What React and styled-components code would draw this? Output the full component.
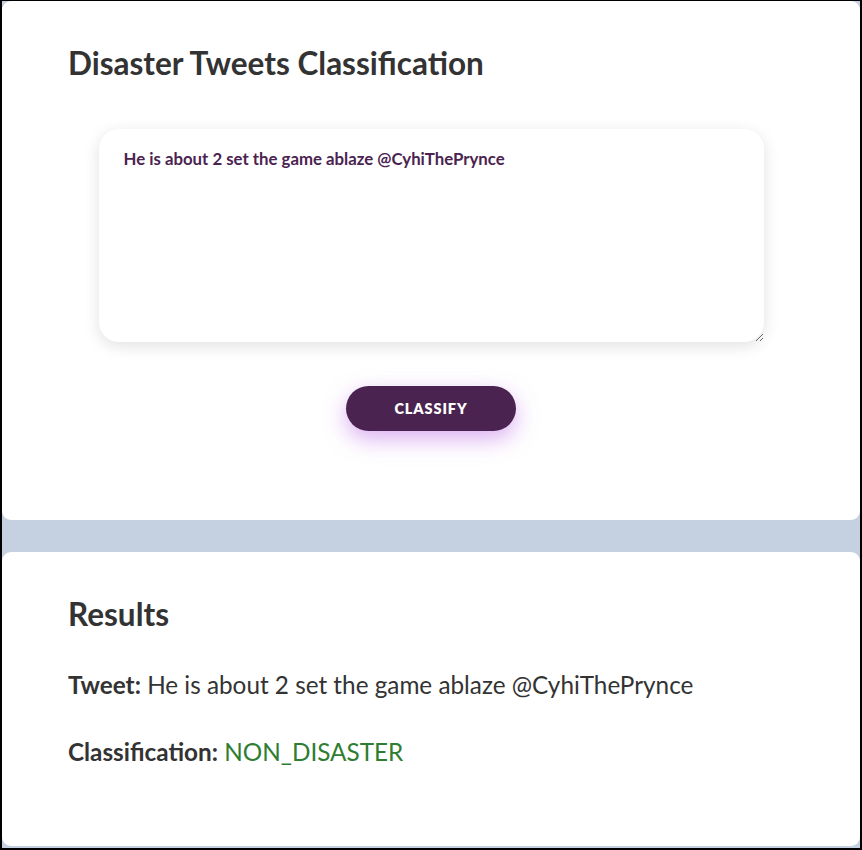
import React, { useState } from "react";
import styled, { createGlobalStyle } from "styled-components";

const Global = createGlobalStyle`
  html, body { margin: 0; padding: 0; background: #000; }
  body { font-family: "Lato", "Noto Sans", sans-serif; }
  * { box-sizing: border-box; }
`;

const Frame = styled.div`
  width: 862px;
  height: 850px;
  border-style: solid;
  border-color: #000;
  border-width: 1px 2px 2px 2px;
  background: #c5d0e0;
  display: flex;
  flex-direction: column;
  gap: 32px;
  overflow: hidden;
`;

const Card = styled.section`
  background: #fff;
  border-radius: 9px;
  padding: ${(p) => p.$pad};
  flex: ${(p) => (p.$grow ? 1 : "none")};
  height: ${(p) => p.$h || "auto"};
  margin-bottom: ${(p) => p.$mb || "0"};
`;

const Title = styled.h1`
  margin: 0;
  font-size: 31.5px;
  font-weight: 700;
  color: #333;
  line-height: 38px;
`;

const Form = styled.div`
  display: flex;
  flex-direction: column;
  align-items: center;
  margin-top: 47px;
`;

const TextArea = styled.textarea`
  width: 665px;
  height: 213px;
  border: none;
  border-radius: 20px;
  padding: 19px 25px;
  font-family: inherit;
  font-size: 16.8px;
  font-weight: 700;
  color: #4a2350;
  box-shadow: 0 4px 16px rgba(0, 0, 0, 0.12);
  outline: none;
  resize: vertical;
`;

const Button = styled.button`
  margin-top: 44px;
  width: 170px;
  height: 45px;
  border: none;
  border-radius: 23px;
  background: #4a2350;
  color: #fff;
  font-family: inherit;
  font-size: 14.5px;
  font-weight: 800;
  letter-spacing: 0.9px;
  box-shadow: 0 8px 22px rgba(190, 110, 230, 0.55);
  cursor: pointer;
`;

const Line = styled.p`
  margin: ${(p) => p.$m || "0"};
  font-size: 24.3px;
  line-height: 30px;
  color: #333;
`;

const Label = styled.strong`
  font-weight: 700;
`;

const Value = styled.span`
  color: ${(p) => p.$color || "#333"};
`;

export default function App() {
  const [text, setText] = useState("He is about 2 set the game ablaze @CyhiThePrynce");
  return (
    <>
      <Global />
      <Frame>
        <Card $pad="43px 66px 0 66px" $h="519px">
          <Title>Disaster Tweets Classification</Title>
          <Form>
            <TextArea value={text} onChange={(e) => setText(e.target.value)} />
            <Button>CLASSIFY</Button>
          </Form>
        </Card>
        <Card $pad="43px 66px 0 66px" $grow $mb="2px">
          <Title>Results</Title>
          <Line $m="37px 0 0 0">
            <Label>Tweet:</Label> He is about 2 set the game ablaze @CyhiThePrynce
          </Line>
          <Line $m="37px 0 0 0">
            <Label>Classification:</Label> <Value $color="#2e7d32">NON_DISASTER</Value>
          </Line>
        </Card>
      </Frame>
    </>
  );
}
